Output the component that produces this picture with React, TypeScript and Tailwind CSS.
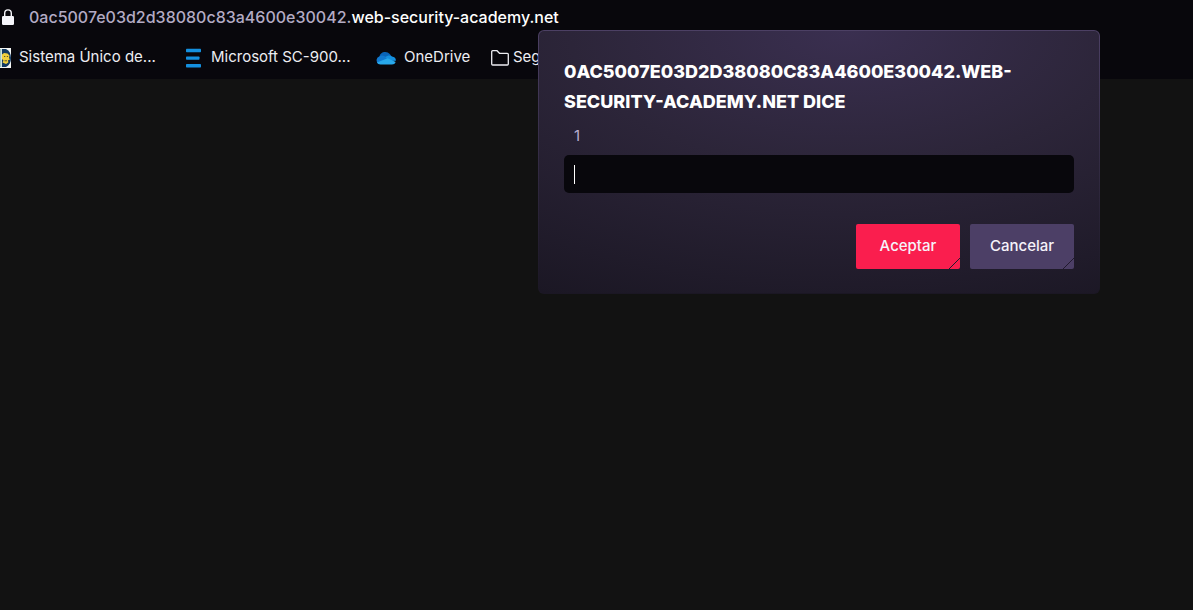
import React from "react";

function LockIcon() {
  return (
    <svg width="12" height="16" viewBox="0 0 12 16" aria-hidden="true" className="shrink-0">
      <path d="M2.7 8V4.2a3.3 3.3 0 0 1 6.6 0V8" fill="none" stroke="#f5f5fa" strokeWidth="1.4" />
      <rect x="0" y="7" width="12" height="9" rx="1.2" fill="#f5f5fa" />
    </svg>
  );
}

function CrestIcon() {
  return (
    <svg width="11" height="20" viewBox="0 0 11 20" aria-hidden="true" className="shrink-0">
      <rect width="11" height="20" fill="#f4f6f5" />
      <path d="M0 1h1.4v18H0z" fill="#9cc4bd" />
      <path d="M2 1h4c3.400 1.600 5 5 5 9S9.400 17.500 6 19H2z" fill="#123a63" />
      <path d="M2 6.500l2-1.500 3.500 .5 2 2-.5 2.500 1 1.500-2 .8.300 2.200-2.300 1.500L2.500 14.500l1-2-1.500-1.500z" fill="#f0cf3c" />
      <path d="M4 8.500h1.300M6.800 8.500h1.300M4.500 12.800h2.500" stroke="#4a4a2a" strokeWidth="0.9" />
    </svg>
  );
}

function BarsIcon() {
  return (
    <svg width="15" height="20" viewBox="0 0 15 20" aria-hidden="true" className="shrink-0">
      <g fill="#1490df">
        <rect x="0" y="0.800" width="15" height="3.400" rx="0.700" />
        <rect x="0" y="8.500" width="13.500" height="3.200" rx="0.700" />
        <rect x="0" y="16" width="15" height="3.400" rx="0.700" />
      </g>
    </svg>
  );
}

function CloudIcon() {
  return (
    <svg width="20" height="14" viewBox="0 0 20 14" aria-hidden="true" className="shrink-0">
      <path d="M3.500 5.200A6 6 0 0 1 13.800 3L16 6 8 10z" fill="#0a64b8" />
      <path d="M3.500 5.200C5.500 4.200 7.500 4.600 9 5.600L14 9 3 13.200A4.300 4.300 0 0 1 3.500 5.200z" fill="#1179d0" />
      <path d="M9 6l3.500-1.500A6 6 0 0 1 16 5.400a4.300 4.300 0 0 1 3.900 4.400L14 10z" fill="#1490df" />
      <path d="M1 11.500L11.500 7.200 19.700 11A4 4 0 0 1 16 13.600H4.500A4.300 4.300 0 0 1 1 11.500z" fill="#28a8ea" />
    </svg>
  );
}

function FolderIcon() {
  return (
    <svg width="18" height="16" viewBox="0 0 18 16" aria-hidden="true" className="shrink-0">
      <path
        d="M.7 14V1.700a1 1 0 0 1 1-1H6l2.500 2.600h7.800a1 1 0 0 1 1 1V14a1 1 0 0 1-1 1H1.700a1 1 0 0 1-1-1z"
        fill="none"
        stroke="#ededf2"
        strokeWidth="1.300"
      />
    </svg>
  );
}

function DialogButton({ label, tone }: { label: string; tone: "accept" | "cancel" }) {
  const color = tone === "accept" ? "bg-[#fa1e4e]" : "bg-[#4c3f66]";
  return (
    <button type="button" className={`relative h-[45px] w-[104px] overflow-hidden rounded-xs text-[15px] font-medium text-[#f6f3fa] ${color}`}>
      {label}
      <svg width="12" height="11" viewBox="0 0 12 11" aria-hidden="true" className="absolute right-0 bottom-0">
        <path d="M1 11L12 0" stroke="#211a2e" strokeWidth="1" />
      </svg>
    </button>
  );
}

export default function App() {
  return (
    <div className="relative min-h-screen overflow-hidden bg-[#121212] font-['Inter',sans-serif]">
      <header className="bg-[#08070c] pb-1">
        <div className="flex h-[34px] items-center gap-[15px] pl-0.5">
          <LockIcon />
          <p className="text-[16px] font-medium whitespace-nowrap text-[#b3abc4]">
            0ac5007e03d2d38080c83a4600e30042.<span className="text-white">web-security-academy.net</span>
          </p>
        </div>
        <nav className="flex h-[41px] items-center pt-1.5 text-[15px] whitespace-nowrap text-[#ededf2]">
          <a href="#sistema" className="flex w-[186px] items-center gap-2"><CrestIcon />Sistema Único de...</a>
          <a href="#sc900" className="flex w-[190px] items-center gap-2.5"><BarsIcon />Microsoft SC-900...</a>
          <a href="#onedrive" className="flex w-[115px] items-center gap-2"><CloudIcon />OneDrive</a>
          <a href="#folder" className="flex items-center gap-1"><FolderIcon />Seg</a>
        </nav>
      </header>

      <form
        role="dialog"
        aria-labelledby="dialog-title"
        onSubmit={(e) => e.preventDefault()}
        className="absolute top-[30px] right-[93px] w-[562px] rounded-md bg-linear-to-b from-[#4c4064] to-[#1b1724] p-px"
      >
        <div className="rounded-[5px] bg-[radial-gradient(ellipse_110%_115%_at_55%_0%,#3a2f50_0%,#2c2539_45%,#1b1724_100%)] px-[25px] pt-[26px] pb-6">
          <h1 id="dialog-title" className="text-[18px] leading-[30px] font-extrabold text-white uppercase">
            0ac5007e03d2d38080c83a4600e30042.web-security-academy.net dice
          </h1>
          <label htmlFor="answer" className="block px-2.5 py-2 text-[15px] leading-[22px] text-[#b9afd0]">1</label>
          <div className="relative">
            <input
              id="answer"
              type="text"
              className="block h-[38px] w-full rounded-[5px] bg-[#08070c] px-2.5 text-[16px] text-white caret-transparent outline-none"
            />
            <span aria-hidden="true" className="absolute top-2.5 left-2.5 h-[19px] w-px bg-white" />
          </div>
          <div className="flex justify-end gap-2.5 pt-[31px]">
            <DialogButton label="Aceptar" tone="accept" />
            <DialogButton label="Cancelar" tone="cancel" />
          </div>
        </div>
      </form>
    </div>
  );
}
